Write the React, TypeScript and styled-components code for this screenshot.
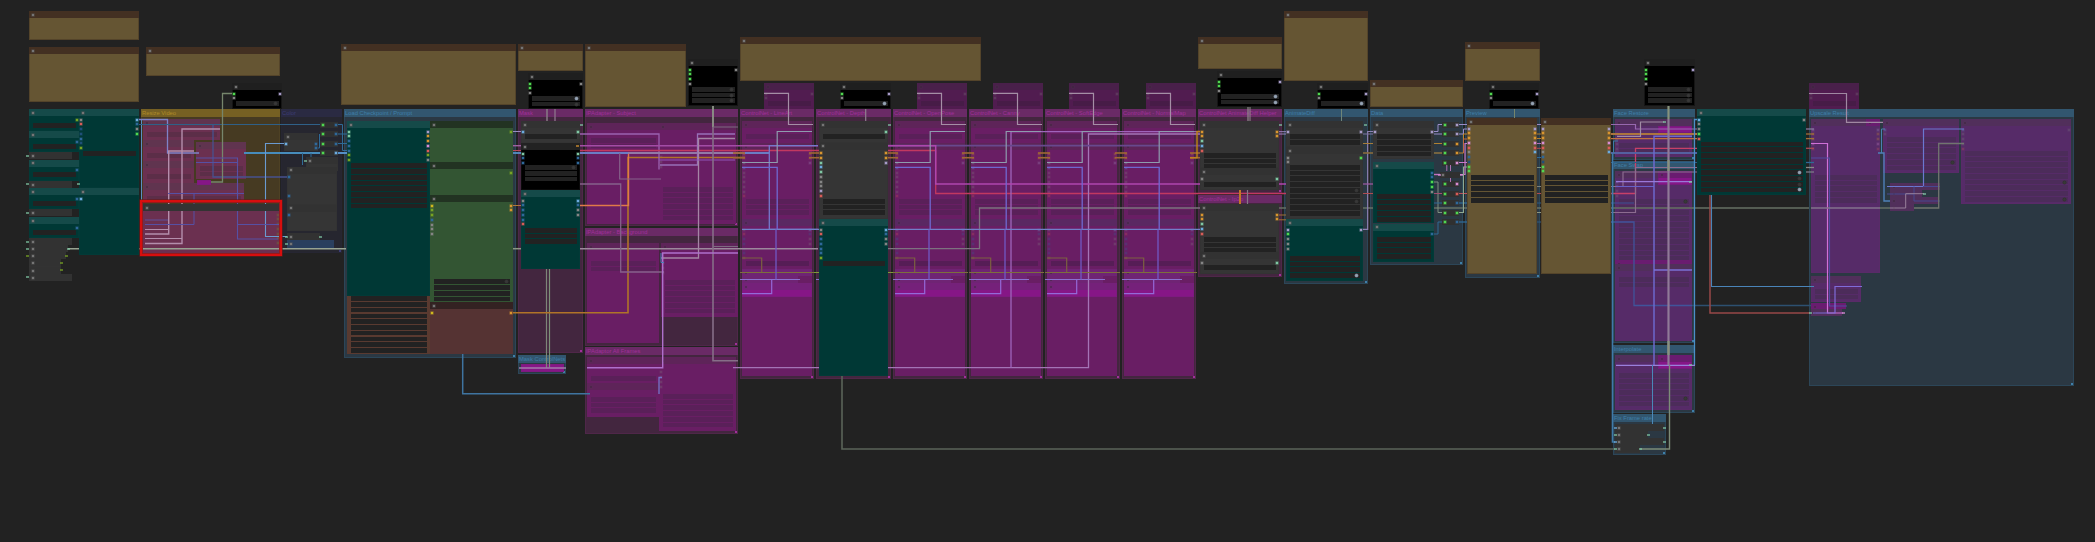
import React from "react";
import styled, { createGlobalStyle } from "styled-components";

const GlobalStyle = createGlobalStyle`
  html, body { margin: 0; padding: 0; background: #222222; overflow: hidden; }
`;

const SLOT = 4.78;
const WIDGET = 5.75;
const HEADER = 7.2;

type Tone = "purple" | "blue" | "olive" | "navy";

const groupTones: Record<Tone, { bar: string; body: string; text: string; edge: string }> = {
  purple: { bar: "#6a2a66", body: "#43263f", text: "#a0309a", edge: "#4f2749" },
  blue: { bar: "#32566f", body: "#2b3843", text: "#3f7fa8", edge: "#2c4658" },
  olive: { bar: "#766023", body: "#463a22", text: "#b08c28", edge: "#4e4124" },
  navy: { bar: "#2a2a42", body: "#26262f", text: "#3c3c74", edge: "#262632" },
};

type Kind =
  | "note" | "teal" | "green" | "brown" | "rust" | "gray" | "black" | "ink"
  | "muted" | "mutedTop" | "mutedTeal" | "mutedBlue" | "haze" | "hot" | "hotBlue"
  | "wine" | "selected" | "steel";

const kinds: Record<Kind, { bar: string; body: string; widget: string; edge: string; dim?: boolean }> = {
  note: { bar: "#433022", body: "#655533", widget: "#222222", edge: "#54442a" },
  teal: { bar: "#154a49", body: "#003835", widget: "#222222", edge: "#023a37" },
  green: { bar: "#223322", body: "#335533", widget: "#222222", edge: "#335533" },
  brown: { bar: "#332222", body: "#553333", widget: "#222222", edge: "#553333" },
  rust: { bar: "#593a30", body: "#593a30", widget: "#222222", edge: "#593a30" },
  gray: { bar: "#323232", body: "#353535", widget: "#222222", edge: "#333333" },
  black: { bar: "#1f1f1f", body: "#000000", widget: "#222222", edge: "#151515" },
  ink: { bar: "#222222", body: "#000000", widget: "#222222", edge: "#0a0a0a" },
  muted: { bar: "#5e2459", body: "#691e64", widget: "#5a2059", edge: "#691e64", dim: true },
  mutedTop: { bar: "#49204a", body: "#511c50", widget: "#471c47", edge: "#501d4e", dim: true },
  mutedTeal: { bar: "#5a2862", body: "#691e64", widget: "#561d56", edge: "#691e64", dim: true },
  mutedBlue: { bar: "#512f5b", body: "#562b68", widget: "#4c2c5a", edge: "#592b68", dim: true },
  haze: { bar: "#6f2474", body: "#77217c", widget: "#5a2059", edge: "#73227a", dim: true },
  hot: { bar: "#75217a", body: "#861686", widget: "#5a2059", edge: "#7e1a80", dim: true },
  hotBlue: { bar: "#6a1c70", body: "#861688", widget: "#5a2059", edge: "#761a7c", dim: true },
  wine: { bar: "#60344f", body: "#6b3050", widget: "#5c2e48", edge: "#6b3050", dim: true },
  selected: { bar: "#333333", body: "#6b3050", widget: "#5c2e48", edge: "#6b3050" },
  steel: { bar: "#2a3f5e", body: "#2a3f5e", widget: "#222222", edge: "#2a3f5e" },
};

const portColors: Record<string, string> = {
  o: "#d8952f", m: "#7fc8a4", b: "#2f689a", l: "#6cacdf", g: "#50d850", e: "#78a424",
  y: "#d0b81e", x: "#858585", v: "#a79bc8", p: "#d98ed4", r: "#d85c58", d: "#1f4f78",
};

interface NodeSpec {
  x: number; y: number; x2: number; y2: number; kind: Kind;
  left?: string; right?: string;
  widgets?: [number, number];
  toggles?: string;
  bare?: boolean;
}

interface GroupSpec { x: number; y: number; x2: number; y2: number; title: string; tone: Tone }

const Canvas = styled.main`
  position: relative;
  width: 2095px;
  height: 542px;
  overflow: hidden;
  background: #222222;
  font-family: "Liberation Sans", Arial, sans-serif;
`;

const GroupBox = styled.section<{ $g: GroupSpec }>`
  position: absolute;
  left: ${(p) => p.$g.x}px;
  top: ${(p) => p.$g.y}px;
  width: ${(p) => p.$g.x2 - p.$g.x}px;
  height: ${(p) => p.$g.y2 - p.$g.y}px;
  box-sizing: border-box;
  display: flex;
  flex-direction: column;
  background: ${(p) => groupTones[p.$g.tone].body};
  border: 1px solid ${(p) => groupTones[p.$g.tone].edge};
  border-top: 0;
`;

const GroupTitle = styled.h2<{ $tone: Tone }>`
  flex: none;
  height: 8px;
  margin: 0 -1px;
  padding-left: 1px;
  font-size: 5.8px;
  line-height: 8px;
  font-weight: 400;
  white-space: nowrap;
  color: ${(p) => groupTones[p.$tone].text};
  background: ${(p) => groupTones[p.$tone].bar};
`;

const Grip = styled.i<{ $tone: Tone }>`
  width: 2px;
  height: 2px;
  margin: auto 0 0 auto;
  background: ${(p) => groupTones[p.$tone].text};
`;

const NodeBox = styled.article<{ $n: NodeSpec }>`
  position: absolute;
  left: ${(p) => p.$n.x}px;
  top: ${(p) => p.$n.y}px;
  width: ${(p) => p.$n.x2 - p.$n.x}px;
  height: ${(p) => p.$n.y2 - p.$n.y}px;
  display: flex;
  flex-direction: column;
  overflow: hidden;
  background: ${(p) => kinds[p.$n.kind].body};
  box-shadow: inset 0 0 0 1px ${(p) => kinds[p.$n.kind].edge};
`;

const Header = styled.header<{ $kind: Kind }>`
  flex: none;
  display: flex;
  align-items: center;
  height: ${HEADER}px;
  padding-left: 2.6px;
  background: ${(p) => kinds[p.$kind].bar};
`;

const Dot = styled.i<{ $dim?: boolean }>`
  width: 2px;
  height: 2px;
  background: ${(p) => (p.$dim ? "rgba(60,40,60,.5)" : "#757575")};
  box-shadow: 0 0 0 0.6px rgba(90, 90, 90, ${(p) => (p.$dim ? 0.15 : 0.7)});
`;

const Slots = styled.div`
  flex: none;
  display: flex;
  justify-content: space-between;
  padding: 1px 1.4px 0;
`;

const SlotColumn = styled.div`
  display: flex;
  flex-direction: column;
`;

const Slot = styled.span`
  display: flex;
  align-items: center;
  height: ${SLOT}px;
`;

const Pin = styled.i<{ $c: string; $dim?: boolean }>`
  width: 2px;
  height: 2px;
  background: ${(p) => p.$c};
  box-shadow: 0 0 0 0.6px ${(p) => p.$c}88;
  opacity: ${(p) => (p.$dim ? 0.25 : 1)};
`;

const Widgets = styled.div<{ $lead: number }>`
  display: flex;
  flex-direction: column;
  flex: none;
  margin: ${(p) => p.$lead}px 3.5px 0;
`;

const Field = styled.div`
  flex: none;
  height: ${WIDGET}px;
`;

const FieldInner = styled.div<{ $c: string }>`
  display: flex;
  align-items: center;
  justify-content: flex-end;
  height: 4.7px;
  padding-right: 2px;
  background: ${(p) => p.$c};
`;

const Toggle = styled.i<{ $on: boolean }>`
  width: 3px;
  height: 3px;
  border-radius: 50%;
  background: ${(p) => (p.$on ? "#96a3b3" : "#383838")};
  box-shadow: 0 0 0 0.5px ${(p) => (p.$on ? "#657080" : "#303030")};
`;

const WireLayer = styled.svg`
  position: absolute;
  left: 0;
  top: 0;
`;

const Pill = styled.div<{ $x: number; $y: number; $w: number }>`
  position: absolute;
  left: ${(p) => p.$x}px;
  top: ${(p) => p.$y}px;
  width: ${(p) => p.$w}px;
  height: 6px;
  box-sizing: border-box;
  padding: 0 1.5px;
  display: flex;
  align-items: center;
  justify-content: space-between;
  background: #303030;
`;

const Selection = styled.div`
  position: absolute;
  left: 140px;
  top: 200px;
  width: 142px;
  height: 56px;
  box-sizing: border-box;
  border: 2px solid #d80e0e;
  box-shadow: inset 0 0 0 1px #98191c, 0 0 0 0.6px #6c1a1a;
`;

const groups: GroupSpec[] = (
  [
    [141, 109, 280, 255, "Resize Video", "olive"],
    [281, 109, 342, 253, "Color", "navy"],
    [344, 109, 516, 358, "Load Checkpoint / Prompt", "blue"],
    [518, 109, 583, 353, "Mask", "purple"],
    [518, 355, 566, 374, "Mask ControlNets", "blue"],
    [585, 109, 738, 226, "IPAdapter - Subject", "purple"],
    [585, 228, 738, 346, "IPAdapter - Background", "purple"],
    [585, 347, 738, 434, "IPAdaptor All Frames", "purple"],
    [740, 109, 814, 379, "ControlNet - LineArt", "purple"],
    [816, 109, 891, 379, "ControlNet - Depth", "purple"],
    [893, 109, 967, 379, "ControlNet - OpenPose", "purple"],
    [969, 109, 1043, 379, "ControlNet - Canny", "purple"],
    [1045, 109, 1120, 379, "ControlNet - SoftEdge", "purple"],
    [1122, 109, 1196, 379, "ControlNet - NormalMap", "purple"],
    [1198, 109, 1282, 193, "ControlNet AnimateDiff Helper", "purple"],
    [1198, 195, 1282, 277, "ControlNet - Ip2p", "purple"],
    [1284, 109, 1368, 284, "AnimateDiff", "blue"],
    [1370, 109, 1463, 265, "Data", "blue"],
    [1465, 109, 1540, 278, "Preview", "blue"],
    [1613, 109, 1695, 160, "Face Restore", "blue"],
    [1613, 161, 1695, 343, "Face Swap", "blue"],
    [1613, 345, 1695, 413, "Interpolate", "blue"],
    [1613, 414, 1666, 455, "Fix Frame rate", "blue"],
    [1809, 109, 2074, 386, "Upscale Result", "blue"],
  ] as [number, number, number, number, string, Tone][]
).map(([x, y, x2, y2, title, tone]) => ({ x, y, x2, y2, title, tone }));

const n = (
  x: number, y: number, x2: number, y2: number, kind: Kind, extra: Partial<NodeSpec> = {}
): NodeSpec => ({ x, y, x2, y2, kind, ...extra });

const controlNets = [740, 893, 969, 1045, 1122];

const mutedNodes: NodeSpec[] = [
  n(143, 119, 220, 140, "wine", { widgets: [132, 1] }),
  n(143, 140, 194, 161, "wine", { widgets: [153, 1] }),
  n(143, 161, 194, 183, "wine", { widgets: [174, 1] }),
  n(143, 183, 244, 203, "wine", { widgets: [196, 1] }),
  n(196, 142, 246, 179, "wine", { widgets: [166, 2] }),
  n(197, 180, 211, 185, "hot", { bare: true }),
  n(142, 204, 280, 254, "selected", { right: "eeeeeee" }),
  n(521, 364, 564, 372, "hot", { bare: true }),
  n(587, 123, 659, 224, "muted", { widgets: [138, 2] }),
  n(659, 123, 736, 224, "muted", { left: "_____xxx", widgets: [187, 6] }),
  n(587, 243, 659, 343, "muted", { widgets: [261, 2] }),
  n(661, 243, 738, 317, "muted", { left: "_xxxx", widgets: [280, 6] }),
  n(587, 357, 659, 383, "muted", { widgets: [376, 1] }),
  n(587, 383, 659, 417, "muted", { widgets: [397, 3] }),
  n(659, 357, 736, 431, "muted", { left: "_xxxx", widgets: [394, 6] }),
  ...controlNets.flatMap((g) => [
    n(g + 24, 83, g + 74, 109, "mutedTop", { left: "xx", right: "x", widgets: [101, 1] }),
    n(g + 2, 121, g + 72, 143, "muted", { widgets: [134.5, 1] }),
    n(g + 2, 143, g + 72, 219, "muted", { left: "oomlxxxxxr", right: "oov", widgets: [199, 3] }),
    n(g + 2, 219, g + 72, 269, "mutedTeal", { left: "xrbbbbe", right: "lbxx", widgets: [261, 1] }),
    n(g + 2, 269, g + 72, 276, "haze"),
    n(g + 2, 276, g + 58, 283, "haze"),
    n(g + 58, 276, g + 72, 283, "muted", { bare: true }),
    n(g + 2, 283, g + 72, 297, "hot"),
    n(g + 2, 297, g + 72, 376, "muted", { bare: true }),
  ]),
  n(1615, 119, 1692, 157, "mutedBlue", { left: "_xxxxx", widgets: [143, 2] }),
  n(1658, 126, 1692, 133, "hotBlue", { bare: true }),
  n(1615, 171, 1692, 264, "mutedBlue", { left: "lxxx", widgets: [199, 11], toggles: "0" }),
  n(1658, 171, 1692, 185, "hotBlue"),
  n(1615, 260, 1692, 264, "hotBlue"),
  n(1615, 264, 1692, 341, "mutedBlue", { widgets: [277, 2] }),
  n(1615, 355, 1692, 410, "mutedBlue", { widgets: [373, 6], toggles: "____0" }),
  n(1658, 355, 1692, 369, "hotBlue"),
  n(1809, 83, 1859, 109, "mutedTop", { left: "xx", right: "x", widgets: [101, 1] }),
  n(1811, 119, 1880, 273, "mutedBlue", { left: "voopr", right: "voopr", widgets: [175, 5] }),
  n(1866, 119, 1880, 126, "hotBlue"),
  n(1883, 119, 1959, 173, "mutedBlue", { left: "lx", widgets: [137, 6], toggles: "____0" }),
  n(1961, 119, 2071, 204, "mutedBlue", { left: "lxxxr", right: "x", widgets: [151, 9], toggles: "_____0__0" }),
  n(1890, 183, 1940, 190, "mutedBlue"),
  n(1890, 190, 1922, 197, "mutedBlue"),
  n(1890, 197, 1938, 204, "mutedBlue"),
  n(1890, 204, 1914, 211, "mutedBlue"),
  n(1811, 276, 1861, 302, "mutedBlue", { widgets: [289, 2] }),
  n(1811, 303, 1846, 309, "hotBlue"),
  n(1811, 309, 1842, 316, "mutedBlue"),
];

const liveNodes: NodeSpec[] = [
  n(29, 11, 139, 40, "note"),
  n(29, 47, 139, 102, "note"),
  n(146, 47, 280, 76, "note"),
  n(341, 44, 516, 105, "note"),
  n(518, 44, 583, 71, "note"),
  n(585, 44, 686, 107, "note"),
  n(740, 37, 981, 81, "note"),
  n(1198, 37, 1282, 69, "note"),
  n(1284, 11, 1368, 81, "note"),
  n(1370, 80, 1463, 107, "note"),
  n(1465, 42, 1540, 81, "note"),

  n(29, 109, 79, 131, "teal", { right: "e", widgets: [123, 1] }),
  n(29, 131, 79, 152, "teal", { right: "b", widgets: [144, 1] }),
  n(29, 159.5, 79, 181, "teal", { right: "b", widgets: [172.5, 1] }),
  n(29, 188, 79, 209, "teal", { right: "b", widgets: [201, 1] }),
  n(29, 217, 79, 238, "teal", { right: "b", widgets: [230, 1] }),
  n(29, 152, 72, 159, "gray"),
  n(29, 181, 72, 188, "gray"),
  n(29, 209, 72, 216, "gray"),
  n(29, 238, 72, 245, "gray"),
  n(29, 245, 68, 252, "gray"),
  n(29, 252, 66, 259, "gray"),
  n(29, 259, 61, 267, "gray"),
  n(29, 267, 61, 274, "gray"),
  n(29, 274, 72, 281, "gray"),
  n(79, 109, 139, 188, "teal", { left: "xrddbde", right: "lbxg", widgets: [151, 1] }),
  n(79, 188, 139, 255, "teal", { left: "l" }),

  n(232, 83, 282, 109, "black", { left: "gx", right: "v", widgets: [101, 1], toggles: "0" }),
  n(528, 73, 583, 109, "black", { left: "ggx", right: "x", widgets: [96, 2], toggles: "10" }),
  n(688, 59, 738, 106, "black", { left: "gggx", right: "x", widgets: [87, 3], toggles: "000" }),
  n(840, 83, 891, 109, "black", { left: "gx", right: "v", widgets: [101, 1], toggles: "1" }),
  n(1217, 71, 1282, 107, "black", { left: "ggx", right: "v", widgets: [94, 2], toggles: "11" }),
  n(1317, 83, 1368, 109, "black", { left: "gx", right: "v", widgets: [101, 1], toggles: "1" }),
  n(1489, 83, 1539, 109, "black", { left: "gx", right: "v", widgets: [101, 1], toggles: "1" }),
  n(1644, 59, 1695, 106, "black", { left: "gggx", right: "v", widgets: [87, 3], toggles: "000" }),

  n(284, 133, 318, 151, "gray", { left: "l", right: "bb" }),
  n(306, 157, 338, 171, "gray"),
  n(287, 166.5, 337, 205, "gray", { left: "b___b" }),
  n(287, 204.5, 337, 231, "gray", { left: "b" }),
  n(287, 233, 320, 240, "gray"),
  n(287, 240, 334, 247.5, "steel"),

  n(347, 121, 430, 296, "teal", { left: "mmbbbee", right: "vooprex", widgets: [163.5, 8] }),
  n(347, 296, 430, 354, "rust", { widgets: [296.3, 10], bare: true }),
  n(430, 121, 513, 162, "green", { right: "e" }),
  n(430, 162, 513, 195, "green", { right: "e" }),
  n(430, 195, 513, 302, "green", { left: "yeebxxx", right: "oo", widgets: [279.5, 4], toggles: "0" }),
  n(430, 302, 513, 354, "brown", { left: "y", right: "o" }),

  n(521, 121, 580, 143, "gray", { left: "l", right: "m", widgets: [134.5, 1] }),
  n(521, 143, 580, 190, "ink", { left: "mbb", right: "mbb", widgets: [165.3, 3], toggles: "0" }),
  n(521, 190, 580, 269, "teal", { left: "xbbbbr", right: "lbxx", widgets: [228, 3] }),

  n(819, 121, 888, 143, "gray", { right: "m", widgets: [134.5, 1] }),
  n(819, 142.5, 888, 219, "gray", { left: "oomlmxxxvr", right: "oov", widgets: [199, 3] }),
  n(819, 219, 888, 376, "teal", { left: "xrbbbbe", right: "lbxx", widgets: [261, 1] }),

  n(1200, 121, 1279, 168, "gray", { left: "oomlr", right: "oo", widgets: [153, 3] }),
  n(1200, 168, 1279, 190, "gray", { left: "x", right: "m", widgets: [182, 1] }),
  n(1200, 204, 1279, 252, "gray", { left: "oomlr", right: "oo", widgets: [237, 3] }),
  n(1200, 252, 1279, 274, "gray", { left: "x", right: "m", widgets: [265.5, 1] }),
  n(1286, 121, 1363, 147, "gray", { left: "v", right: "v", widgets: [134.5, 2] }),
  n(1286, 147, 1363, 219, "gray", { left: "xx", right: "g", widgets: [165, 9], toggles: "____0_0" }),
  n(1286, 219, 1363, 281, "teal", { left: "vgxxx", right: "v", widgets: [256, 4], toggles: "___1" }),
  n(1373, 121, 1434, 159, "gray", { left: "v", right: "v", widgets: [134.5, 4] }),
  n(1373, 162, 1434, 223, "teal", { right: "bbggx", widgets: [194, 5] }),
  n(1373, 223.5, 1434, 262, "teal", { right: "b", widgets: [237, 4] }),
  n(1467, 118, 1537, 274, "note", { left: "vooprxbdgg", right: "vooprl", widgets: [175, 5] }),
  n(1541, 118, 1611, 274, "note", { left: "vooprxbdgg", right: "vooprl", widgets: [175, 5] }),
  n(1697, 109, 1806, 195, "teal", { left: "lxxgr", right: "x", widgets: [141.7, 9], toggles: "_____1001" }),

  n(1615, 424, 1664, 431, "gray"),
  n(1615, 431, 1648, 438, "gray"),
  n(1615, 438, 1664, 445, "gray"),
  n(1615, 445, 1640, 453, "gray"),
];

const dataOutputs = "vvoopprbgb";

const reroutes: { x: number; y: number; w: number; out: string }[] = [
  ...[124.5, 134, 143.5, 153].map((y, i) => ({ x: 320, y, w: 18, out: i === 3 ? "l" : "b" })),
  ...[124.5, 134, 143.5, 153, 162.5, 184, 193.5, 203, 212.5, 222].map((y, i) => ({
    x: 1442, y, w: 17, out: dataOutputs[i],
  })),
];

type Wire = [color: string, points: string, width?: number];

const wires: Wire[] = [
  ["#5a8fc0", "137,119.5 141.5,119.5 141.5,201", 1],
  ["#7f82c8", "137,119.5 167.5,119.5 167.5,153 199,153", 1.3],
  ["#2f6088", "137,124.5 320,124.5"],
  ["#47528e", "213,124.5 213,177 289,177", 1.3],
  ["#b48eac", "220,129 182,129 182,243.5 145,243.5", 1.4],
  ["#b48eac", "194,151 168.7,151 168.7,234 145,234", 1.4],
  ["#b48eac", "145,229.5 168.5,229.5"],
  ["#b48eac", "145,238.5 182,238.5"],
  ["#76866c", "232,93.5 222.5,93.5 222.5,182 211,182", 1.3],
  ["#478cbc", "244,153 321,153", 1.8],
  ["#6a9ad0", "287,143.5 265.5,143.5 265.5,236.5 287,236.5", 1.1],
  ["#5650a4", "196,158 237.5,158 237.5,239 278,239", 1.1],
  ["#5650a4", "196,162.5 237.5,162.5"],
  ["#5650a4", "237.5,224.5 280,224.5"],
  ["#5f509a", "145,220 168,220"],
  ["#5650a4", "145,224.5 194,224.5 194,193.5"],
  ["#5650a4", "168,193.5 244,193.5"],
  ["#2f6a96", "302.5,153 302.5,165"],
  ["#2f6a96", "311,153 311,158"],
  ["#2f6a96", "316,148 319.5,148 319.5,134"],
  ["#2f6a96", "338,124.5 342.5,124.5 342.5,150.5 347,150.5"],
  ["#2f6a96", "338,134 347,134"],
  ["#2f6a96", "338,143.5 347,143.5"],
  ["#5590c8", "338,153 347,153", 2],
  ["#98a392", "68,248.7 346,248.7", 1.5],
  ["#8c9686", "513,248.7 521,248.7", 1.5],
  ["#9c889c", "580,248.7 818,248.7", 1.4],
  ["#7d727f", "888,248.7 979.5,248.7 979.5,208 1200,208", 1.3],
  ["#667064", "1200,208 1809,208", 1.6],
  ["#9b8ac0", "513,131.5 521,131.5"],
  ["#a060a0", "513,145.7 521,145.7", 1.4],
  ["#b84858", "513,150.5 521,150.5"],
  ["#5590c8", "513,153 521,153", 1.8],
  ["#b0743a", "513,205.5 521,205.5"],
  ["#8a8088", "547,109 547,121", 1.4],
  ["#8a7088", "555,109 555,121", 1.4],
  ["#7d8578", "546.5,269 546.5,367.7", 1.2],
  ["#7d9078", "549.5,269 549.5,367.7", 1.2],
  ["#a07cab", "519,368 566,368", 1.3],
  ["#3f74a0", "462.7,354 462.7,393.7 590,393.7", 1.5],
  ["#b07428", "513,312.8 628,312.8 628,157.5 745,157.5", 1.6],
  ["#e07a48", "580,205.5 628.5,205.5 628.5,153", 1.4],
  ["#9a62b0", "580,134 659,134 659,169.5", 1.3],
  ["#a44ca6", "580,145.7 818,145.7", 1.4],
  ["#c23860", "580,150.5 935.7,150.5 935.7,193.5 1286,193.5", 1.3],
  ["#6a7cc4", "580,153 769.3,153", 2],
  ["#a0789c", "628,153 745,153", 1.6],
  ["#7478cc", "818,145.7 769.3,145.7 769.3,229.3 818,229.3", 1.3],
  ["#85628a", "619.7,153 619.7,179 661,179", 1.2],
  ["#85628a", "580,184 620.7,184 620.7,272 664,272", 1.3],
  ["#9870b8", "735,134 697.5,134 697.5,165 660,165", 1.3],
  ["#a585a5", "735,138.5 698.5,138.5 698.5,258 661,258", 1.3],
  ["#9055b8", "735,160 659,160", 1.2],
  ["#866e88", "713,106 713,360.7 738,360.7", 1.6],
  ["#8b9685", "713,106 713,127", 1.6],
  ["#7d6a80", "713,127 738,127"],
  ["#7d6a80", "713,246.5 738,246.5"],
  ["#ae70cc", "738,253 662.7,253 662.7,367.7 587,367.7", 1.4],
  ["#4a80b8", "661,253 661,262.5 664,262.5"],
  ["#7474c8", "659,394 659,377.5 662,377.5", 1.3],
  ["#a474b6", "733,367.7 1088.5,367.7 1088.5,134 1200,134", 1.3],
  ["#9f64bc", "1011,367.7 1011,131.7 1200,131.7", 1.3],
  ["#68488e", "888,145.7 1200,145.7", 1.7],
  ["#ae46ae", "888,145.7 935.7,145.7 935.7,184 1286,184", 1.5],
  ["#7080c8", "742,229.3 1200,229.3", 1.3],
  ...controlNets.flatMap((g): Wire[] => [
    ["#a58ea6", `${g + 24},93.3 ${g + 48.5},93.3 ${g + 48.5},124.5 ${g + 73},124.5`, 1.2],
    ["#8e9cae", `${g + 72},131.5 ${g + 37.2},131.5 ${g + 37.2},162.5 ${g + 2},162.5`, 1.2],
    ["#7068d0", `${g + 2},167.3 ${g + 37.2},167.3 ${g + 37.2},229.3`, 1.3],
    ["#7c6040", `${g + 2},258 ${g + 21.7},258 ${g + 21.7},272.5`, 1.2],
    ["#7d6e3c", `${g},272.5 ${g + 75},272.5`],
    ["#8a70d0", `${g},279.5 ${g + 60},279.5`],
    ["#7058c4", `${g + 36},229.3 ${g + 36},279.5`, 1.3],
    ["#9468d8", `${g + 31.7},279.5 ${g + 31.7},293.7 ${g + 2},293.7`, 1.2],
  ]),
  ...[740, 816, 893, 969, 1045, 1122, 1197].flatMap((g): Wire[] => [
    ["#a06834", `${g - 7},153 ${g + 5},153`, 1.6],
    ["#a06834", `${g - 7},157.7 ${g + 5},157.7`, 1.6],
  ]),
  ["#7f9a38", "814,272.5 819,272.5"],
  ["#7f9a38", "888,272.5 893,272.5"],
  ["#8a70d0", "816,279.5 819,279.5"],
  ["#8f8090", "865.7,109 865.7,121", 1.2],
  ["#5b6459", "842,376 842,449 1616,449", 1.6],
  ["#c08020", "1190,157.7 1197,157.7 1197,131.5 1200,131.5", 1.5],
  ["#9b86c0", "1279,131.7 1286,131.7"],
  ["#9b86c0", "1279,134 1286,134"],
  ["#c07828", "1240,190 1240,204", 2],
  ["#867888", "1247.5,190 1247.5,204", 1.2],
  ["#8f8a8c", "1248,107 1248,121", 1.2],
  ["#8f8a8c", "1250,107 1250,121"],
  ["#a07034", "1279,215 1286,215"],
  ["#a07034", "1279,219.8 1286,219.8"],
  ["#6f8578", "1341.5,109 1341.5,121"],
  ["#8f82b4", "1363,229.3 1367.7,229.3 1367.7,131.5 1373,131.5", 1.2],
  ["#7f74a4", "1363,134 1373,134"],
  ["#a87c38", "1363,143.5 1373,143.5"],
  ["#8a6c3c", "1363,153 1373,153", 1.6],
  ["#9a58a0", "1363,184 1373,184", 1.3],
  ["#b04c50", "1363,193.5 1373,193.5"],
  ["#9b8cc8", "1434,131.5 1438,131.5 1438,124.5 1443,124.5"],
  ["#9b8cc8", "1434,134 1443,134"],
  ["#b08030", "1434,143.5 1443,143.5"],
  ["#8a7040", "1434,153 1443,153", 1.6],
  ["#c070c0", "1434,174.5 1440,174.5", 1.4],
  ["#7d9080", "1434,182 1438,182 1438,212.5 1443,212.5"],
  ["#a05070", "1434,193.5 1443,193.5"],
  ["#2f6a96", "1434,203 1443,203"],
  ["#2f6a96", "1434,234 1438,234 1438,222 1443,222"],
  ["#9b8cc8", "1459,124.5 1467,124.5"],
  ["#9b8cc8", "1459,134 1463.5,134 1463.5,129 1467,129"],
  ["#c08828", "1459,153 1463.5,153 1463.5,134 1467,134"],
  ["#c06a40", "1463.5,153 1463.5,139 1467,139"],
  ["#c878c8", "1459,162.5 1467,162.5"],
  ["#c878c8", "1460,174.5 1465,174.5 1465,143.5 1467,143.5", 1.2],
  ["#c05058", "1459,193.5 1467,193.5"],
  ["#2f6a96", "1459,203 1467,203", 1.3],
  ["#8fa890", "1459,212.5 1463.5,212.5 1463.5,167 1467,167", 1.1],
  ["#2f6a96", "1459,222 1467,222", 1.3],
  ["#76856c", "1514.5,109 1514.5,118"],
  ...([
    ["#9b86c0", 124.5], ["#b07c30", 134], ["#b07c30", 138.5], ["#b070b0", 143.5], ["#b04c50", 148.3],
    ["#2f6a96", 157.5], ["#7d9080", 167.5], ["#7d8078", 186.5], ["#b04c50", 193.5],
    ["#2f5a80", 203], ["#8a9480", 212.5], ["#2f5a80", 222],
  ] as [string, number][]).map(([c, y]): Wire => [c, `1537,${y} 1541,${y}`]),
  ["#9868b0", "1611,124.5 1635.5,124.5 1635.5,129 1699,129", 1.2],
  ["#ac743e", "1611,134 1697,134", 1.8],
  ["#c07040", "1611,138.6 1697,138.6", 1.4],
  ["#c84068", "1611,193.5 1635.5,193.5 1635.5,148.3 1697,148.3", 1.3],
  ["#5460a0", "1611,153 1697,153", 1.8],
  ["#2d6088", "1611,162.5 1697,162.5", 1.1],
  ["#8c6c90", "1611,212.5 1635.5,212.5 1635.5,167.5 1697,167.5", 1.2],
  ["#8c6c90", "1611,186.5 1623,186.5 1623,172 1699,172", 1.2],
  ["#6860c8", "1616,186.5 1654,186.5", 1.2],
  ["#3f5098", "1611,203 1634,203"],
  ["#40549a", "1611,222 1634,222 1634,305.5 1692,305.5", 1.3],
  ["#2d5070", "1692,305.5 1811,305.5", 1.5],
  ["#a08ca4", "1664,122 1640.5,122 1640.5,136.3 1617,136.3", 1.2],
  ["#6c68cc", "1692,136.3 1654,136.3 1654,365", 1.5],
  ["#7c70d8", "1654,270 1692,270", 1.4],
  ["#9a78d8", "1616,181.6 1692,181.6", 1.2],
  ["#3f7aa8", "1618,141 1613.5,141 1613.5,153"],
  ["#3f7aa8", "1612.5,153 1612.5,442 1616,442", 1.6],
  ["#4a90c8", "1697,119.5 1694.5,119.5 1694.5,365.3", 1.3],
  ["#9a80dc", "1695,365.3 1616,365.3", 1.2],
  ["#907a98", "1668.5,119 1668.5,365", 2.2],
  ["#87937c", "1668.5,106 1668.5,119", 2.2],
  ["#87937c", "1668.5,160 1668.5,171", 2.2],
  ["#87937c", "1668.5,341 1668.5,355", 2.2],
  ["#7d8c78", "1669.5,365 1669.5,449 1640,449", 1.4],
  ["#984848", "1710,195 1710,313 1810,313", 1.5],
  ["#4a84b8", "1711.5,195 1711.5,286.5 1814,286.5", 1.1],
  ...([
    ["#8878a0", 129], ["#a07038", 134], ["#a07038", 138.6], ["#a84c58", 148.3],
    ["#2f6a96", 162.5], ["#8a8a88", 167.5], ["#7a7a88", 172],
  ] as [string, number][]).map(([c, y]): Wire => [c, `1806,${y} 1814,${y}`, 1.3]),
  ["#a088a2", "1809,93.5 1846.5,93.5 1846.5,122.3 1883,122.3", 1.2],
  ["#d070d8", "1811,143.5 1827.5,143.5 1827.5,313 1843,313", 1.2],
  ["#504aa0", "1811,158 1829.5,158 1829.5,306 1847,306", 1.2],
  ["#4f80b8", "1878,153 1884,153 1884,201 1890,201", 1.4],
  ["#4a80b0", "1881.5,153 1881.5,129 1885,129"],
  ["#6a78d0", "1887,186.5 1923.5,186.5 1923.5,129 1964,129", 1.2],
  ["#474890", "1887,194 1914,194"],
  ["#474890", "1923,186.5 1940,186.5"],
  ["#474890", "1914,186.5 1914,201 1940,201"],
  ["#83738c", "1811,208 1880,208", 1.5],
  ["#667064", "1880,208 1890,208", 1.5],
  ["#98809c", "1890,208 1905.7,208 1905.7,193.7 1924,193.7"],
  ["#71756f", "1914,208 1938.7,208 1938.7,143.5 1964,143.5", 1.3],
  ["#7f6cd8", "1813,313 1835,313 1835,286.5 1862,286.5", 1.2],
];

const topWires: Wire[] = [
  ["#4a88b8", "1652.5,365 1652.5,424"],
  ["#b070b0", "1446.8,165 1446.8,171"],
  ["#b070b0", "1450.5,165 1450.5,171"],
  ["#b070b0", "1450.5,178 1450.5,182"],
];

const pins: [string, number, number][] = [
  ...[155.5, 184, 212.5, 241.5, 248.5, 277].map((y): [string, number, number] => ["m", 27.5, y]),
  ["e", 27.5, 256],
  ["m", 68.5, 248.5], ["e", 66.5, 256], ["e", 61, 263], ["e", 61, 270], ["m", 78, 184],
  ["m", 320, 236.5], ["m", 286.5, 236.5], ["m", 286.5, 243.5], ["m", 305.5, 160.5],
  ["m", 581, 124.5], ["o", 577, 145.5], ["m", 889, 124.5], ["m", 1280, 124.5], ["m", 1365, 124.5],
  ["l", 1615.5, 427.5], ["m", 1615.5, 434.5], ["l", 1615.5, 442], ["m", 1615.5, 449],
  ["m", 1664, 427.5], ["m", 1648, 434.5], ["m", 1664, 442], ["m", 1640, 449],
  ["p", 1439, 174.5], ["p", 1461, 174.5],
  ["m", 1664, 122], ["m", 1690, 181.5], ["m", 1690, 365.3],
  ["m", 1924, 193.7], ["p", 1843, 313], ["m", 1810, 313],
];

const FloatingPin = styled.i<{ $c: string; $x: number; $y: number }>`
  position: absolute;
  left: ${(p) => p.$x - 1.5}px;
  top: ${(p) => p.$y - 0.9}px;
  width: 3px;
  height: 2px;
  background: ${(p) => p.$c};
  opacity: 0.65;
`;

function Column({ ports, dim }: { ports: string; dim?: boolean }) {
  return (
    <SlotColumn>
      {ports.split("").map((c, i) => (
        <Slot key={i}>{c !== "_" && <Pin $c={portColors[c]} $dim={dim} />}</Slot>
      ))}
    </SlotColumn>
  );
}

function GraphNode({ spec }: { spec: NodeSpec }) {
  const theme = kinds[spec.kind];
  const left = spec.left ?? "";
  const right = spec.right ?? "";
  const rows = Math.max(left.length, right.length);
  const used = (spec.bare ? 0 : HEADER) + (rows ? 1 + rows * SLOT : 0);
  return (
    <NodeBox $n={spec}>
      {!spec.bare && (
        <Header $kind={spec.kind}>
          <Dot $dim={theme.dim} />
        </Header>
      )}
      {rows > 0 && (
        <Slots>
          <Column ports={left} dim={theme.dim} />
          <Column ports={right} dim={theme.dim || spec.kind === "selected"} />
        </Slots>
      )}
      {spec.widgets && (
        <Widgets $lead={spec.widgets[0] - spec.y - used}>
          {Array.from({ length: spec.widgets[1] }, (_, i) => {
            const t = spec.toggles?.[i];
            return (
              <Field key={i}>
                <FieldInner $c={theme.widget}>
                  {(t === "0" || t === "1") && <Toggle $on={t === "1"} />}
                </FieldInner>
              </Field>
            );
          })}
        </Widgets>
      )}
    </NodeBox>
  );
}

function Wires({ items }: { items: Wire[] }) {
  return (
    <WireLayer width="2095" height="542" viewBox="0 0 2095 542" fill="none">
      {items.map(([color, points, width = 1], i) => (
        <polyline key={i} points={points} stroke={color} strokeWidth={width} />
      ))}
    </WireLayer>
  );
}

const SelectedBar = styled.div`
  position: absolute;
  left: 143px;
  top: 204px;
  width: 136px;
  height: 7px;
  box-sizing: border-box;
  padding-left: 3px;
  display: flex;
  align-items: center;
  background: #333333;
`;

export default function App() {
  return (
    <>
      <GlobalStyle />
      <Canvas>
        {groups.map((g) => (
          <GroupBox key={g.title} $g={g}>
            <GroupTitle $tone={g.tone}>{g.title}</GroupTitle>
            <Grip $tone={g.tone} />
          </GroupBox>
        ))}
        {mutedNodes.map((spec, i) => (
          <GraphNode key={i} spec={spec} />
        ))}
        <Wires items={wires} />
        {liveNodes.map((spec, i) => (
          <GraphNode key={i} spec={spec} />
        ))}
        {reroutes.map((r, i) => (
          <Pill key={i} $x={r.x} $y={r.y - 3} $w={r.w}>
            <Pin $c={portColors.g} />
            <Pin $c={portColors[r.out]} />
          </Pill>
        ))}
        <Pill $x={1440} $y={171.5} $w={20}>
          <Dot />
        </Pill>
        <Wires items={topWires} />
        {pins.map(([c, x, y], i) => (
          <FloatingPin key={i} $c={portColors[c]} $x={x} $y={y} />
        ))}
        <SelectedBar>
          <Dot />
        </SelectedBar>
        <Selection />
      </Canvas>
    </>
  );
}
